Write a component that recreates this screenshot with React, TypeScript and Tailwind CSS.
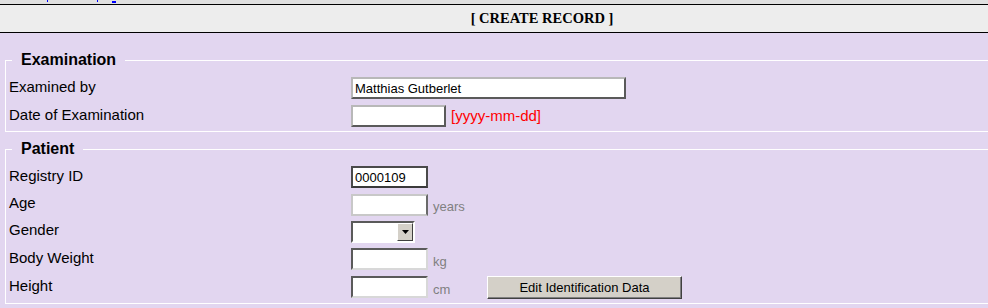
import * as React from "react"

const raised = "border-2 border-t-[#b8b8b8] border-l-[#b8b8b8] border-r-[#5a5a5a] border-b-[#5a5a5a]"
const sunken = "border-2 border-t-[#5a5a5a] border-l-[#5a5a5a] border-r-[#d8d8d8] border-b-[#d8d8d8]"

function TextBox({ w, value, tone = raised }: { w: string; value?: string; tone?: string }) {
    return (
        <div className={`${w} h-[22px] bg-white ${tone} flex items-center px-[2px] text-[13px] text-black leading-none`}>
            {value}
        </div>
    )
}

function Row({ label, h, children }: { label: string; h: string; children: React.ReactNode }) {
    return (
        <div className={`flex items-center ${h}`}>
            <span className="w-[342px] shrink-0 pb-[4px] text-[15px] leading-none text-black">{label}</span>
            <div className="flex items-center">{children}</div>
        </div>
    )
}

function Unit({ children }: { children: React.ReactNode }) {
    return <span className="ml-[5px] text-[13px] text-[#808080] leading-none pt-[4px]">{children}</span>
}

export default function App() {
    return (
        <div className="w-[988px] h-[308px] overflow-hidden bg-[#e2d6f0] font-['Liberation_Sans',Arial,sans-serif]">
            <div className="w-[1084px]">
                {/* nav strip, cut off at the top */}
                <div className="h-[4px] bg-[#e0e0e0] flex items-start">
                    <span className="ml-[47px] w-[1px] h-[2px] bg-[#0000ff]" />
                    <span className="ml-[49px] w-[1px] h-[2px] bg-[#0000ff]" />
                    <span className="ml-[14px] mt-[1px] w-[4px] h-[2px] bg-[#0000ff]" />
                </div>
                <div className="h-[29px] border-y border-black bg-[#ededed] flex items-center justify-center">
                    <span className="font-['Liberation_Serif','Times_New_Roman',serif] font-bold text-[14.5px] text-black">
                        [ CREATE RECORD ]
                    </span>
                </div>

                <fieldset className="mt-[18px] ml-[5px] mr-[5px] border border-white pl-[3px] pt-[5px] pb-[1px]">
                    <legend className="ml-[3px] px-[9px] text-[16px] font-bold leading-[18px] text-black">Examination</legend>
                    <Row label="Examined by" h="h-[28px]">
                        <TextBox w="w-[275px]" value="Matthias Gutberlet" />
                    </Row>
                    <Row label="Date of Examination" h="h-[28px]">
                        <TextBox w="w-[95px]" />
                        <span className="ml-[5px] pb-[2px] text-[15px] text-[#ff0000] leading-none">[yyyy-mm-dd]</span>
                    </Row>
                </fieldset>

                <fieldset className="mt-[8px] ml-[5px] mr-[5px] border border-white pl-[3px] pt-[5px] pb-[2px]">
                    <legend className="ml-[3px] px-[9px] text-[16px] font-bold leading-[18px] text-black">Patient</legend>
                    <Row label="Registry ID" h="h-[28px]">
                        <TextBox w="w-[77px]" value="0000109" tone="border-2 border-[#4a4a4a] border-b-[#3a3a3a]" />
                    </Row>
                    <Row label="Age" h="h-[27px]">
                        <TextBox w="w-[77px]" tone="border-2 border-t-[#c8c8c8] border-l-[#c8c8c8] border-r-[#6a6a6a] border-b-[#c8c8c8]" />
                        <Unit>years</Unit>
                    </Row>
                    <Row label="Gender" h="h-[27px]">
                        <div className="w-[64px] h-[22px] flex border-2 border-t-[#5a5a5a] border-l-[#5a5a5a] border-r-white border-b-white bg-white">
                            <div className="flex-1" />
                            <div className="w-[16px] h-full bg-[#d4d0c8] border border-t-white border-l-white border-r-[#404040] border-b-[#404040] flex items-center justify-center">
                                <svg width="7" height="4" viewBox="0 0 7 4">
                                    <path d="M0 0h7L3.5 4z" fill="#000" />
                                </svg>
                            </div>
                        </div>
                    </Row>
                    <Row label="Body Weight" h="h-[28px]">
                        <TextBox w="w-[77px]" tone={sunken} />
                        <Unit>kg</Unit>
                    </Row>
                    <Row label="Height" h="h-[28px]">
                        <TextBox w="w-[77px]" tone={sunken} />
                        <span className="ml-[5px] w-[54px] text-[13px] text-[#808080] leading-none pt-[4px]">cm</span>
                        <button className="w-[195px] h-[23px] bg-[#d4d0c8] border border-t-white border-l-white border-r-[#404040] border-b-[#404040] shadow-[inset_-1px_-1px_0_#808080] text-[13px] text-black leading-none">
                            Edit Identification Data
                        </button>
                    </Row>
                </fieldset>
            </div>
        </div>
    )
}
